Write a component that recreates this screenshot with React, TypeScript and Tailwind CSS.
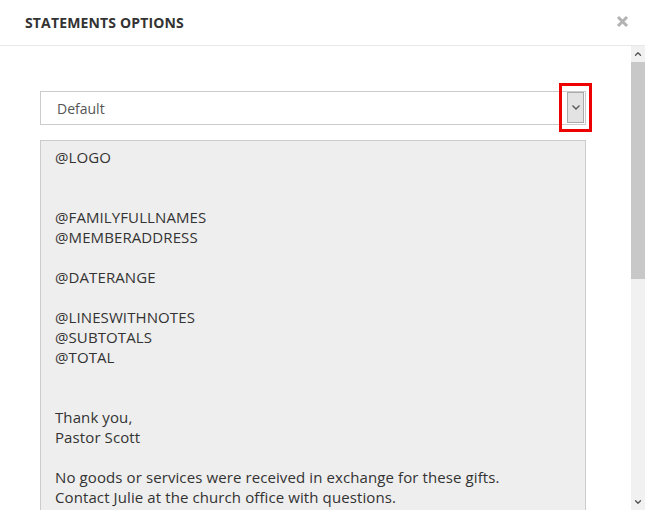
import { ChevronDown, ChevronUp } from "lucide-react";

const lines = [
  "@LOGO",
  "",
  "",
  "@FAMILYFULLNAMES",
  "@MEMBERADDRESS",
  "",
  "@DATERANGE",
  "",
  "@LINESWITHNOTES",
  "@SUBTOTALS",
  "@TOTAL",
  "",
  "",
  "Thank you,",
  "Pastor Scott",
  "",
  "No goods or services were received in exchange for these gifts.",
  "Contact Julie at the church office with questions.",
  "",
  "",
];

export default function App() {
  return (
    <div
      className="w-[645px] h-[510px] bg-white overflow-hidden flex flex-col"
      style={{ fontFamily: '"Open Sans", sans-serif' }}
    >
      {/* Header */}
      <div className="h-[46px] shrink-0 flex items-center justify-between pl-[25px] pr-[16px] border-b border-[#e8e8e8]">
        <h2 className="text-[14px] font-bold tracking-[0.15px] text-[#333]">
          STATEMENTS OPTIONS
        </h2>
        <svg width="13" height="13" viewBox="0 0 13 13" className="-mt-[2px]">
          <path
            d="M2 2 L11 11 M11 2 L2 11"
            stroke="#b3b3b3"
            strokeWidth="3"
            strokeLinecap="butt"
          />
        </svg>
      </div>

      {/* Body */}
      <div className="flex flex-1 min-h-0">
        <div className="flex-1 pl-[40px] pr-[45px] pt-[45px] flex flex-col gap-[15px]">
          {/* Template select */}
          <div className="relative h-[34px] border border-[#ccc] flex items-center">
            <span className="pl-[16px] text-[14px] text-[#555]">Default</span>
            <div className="absolute right-[1px] top-0 bottom-[1px] w-[17px] bg-[#e3e3e3] border border-[#aaa] flex items-center justify-center">
              <svg width="8" height="5" viewBox="0 0 8 5">
                <path d="M0.5 0.5 L4 4 L7.5 0.5" fill="none" stroke="#555" strokeWidth="1.3" />
              </svg>
            </div>
            <div className="absolute -right-[7px] -top-[9px] w-[33px] h-[49px] border-[3px] border-[#ee0000]" />
          </div>

          {/* Template body */}
          <div className="flex-1 bg-[#eeeeee] border border-[#ccc] border-b-0 pl-[14px] pt-[6px] text-[15px] tracking-[0.1px] leading-[20px] text-[#333] overflow-hidden">
            {lines.map((line, i) => (
              <div key={i} className="h-[20px] whitespace-nowrap">
                {line}
              </div>
            ))}
          </div>
        </div>

        {/* Scrollbar */}
        <div className="w-[14px] shrink-0 bg-[#f1f1f1] flex flex-col">
          <div className="h-[16px] flex items-center justify-center">
            <ChevronUp size={10} strokeWidth={3} className="text-[#505050]" />
          </div>
          <div className="h-[217px] bg-[#c8c8c8]" />
          <div className="flex-1" />
          <div className="h-[16px] flex items-center justify-center">
            <ChevronDown size={10} strokeWidth={3} className="text-[#505050]" />
          </div>
        </div>
      </div>
    </div>
  );
}
